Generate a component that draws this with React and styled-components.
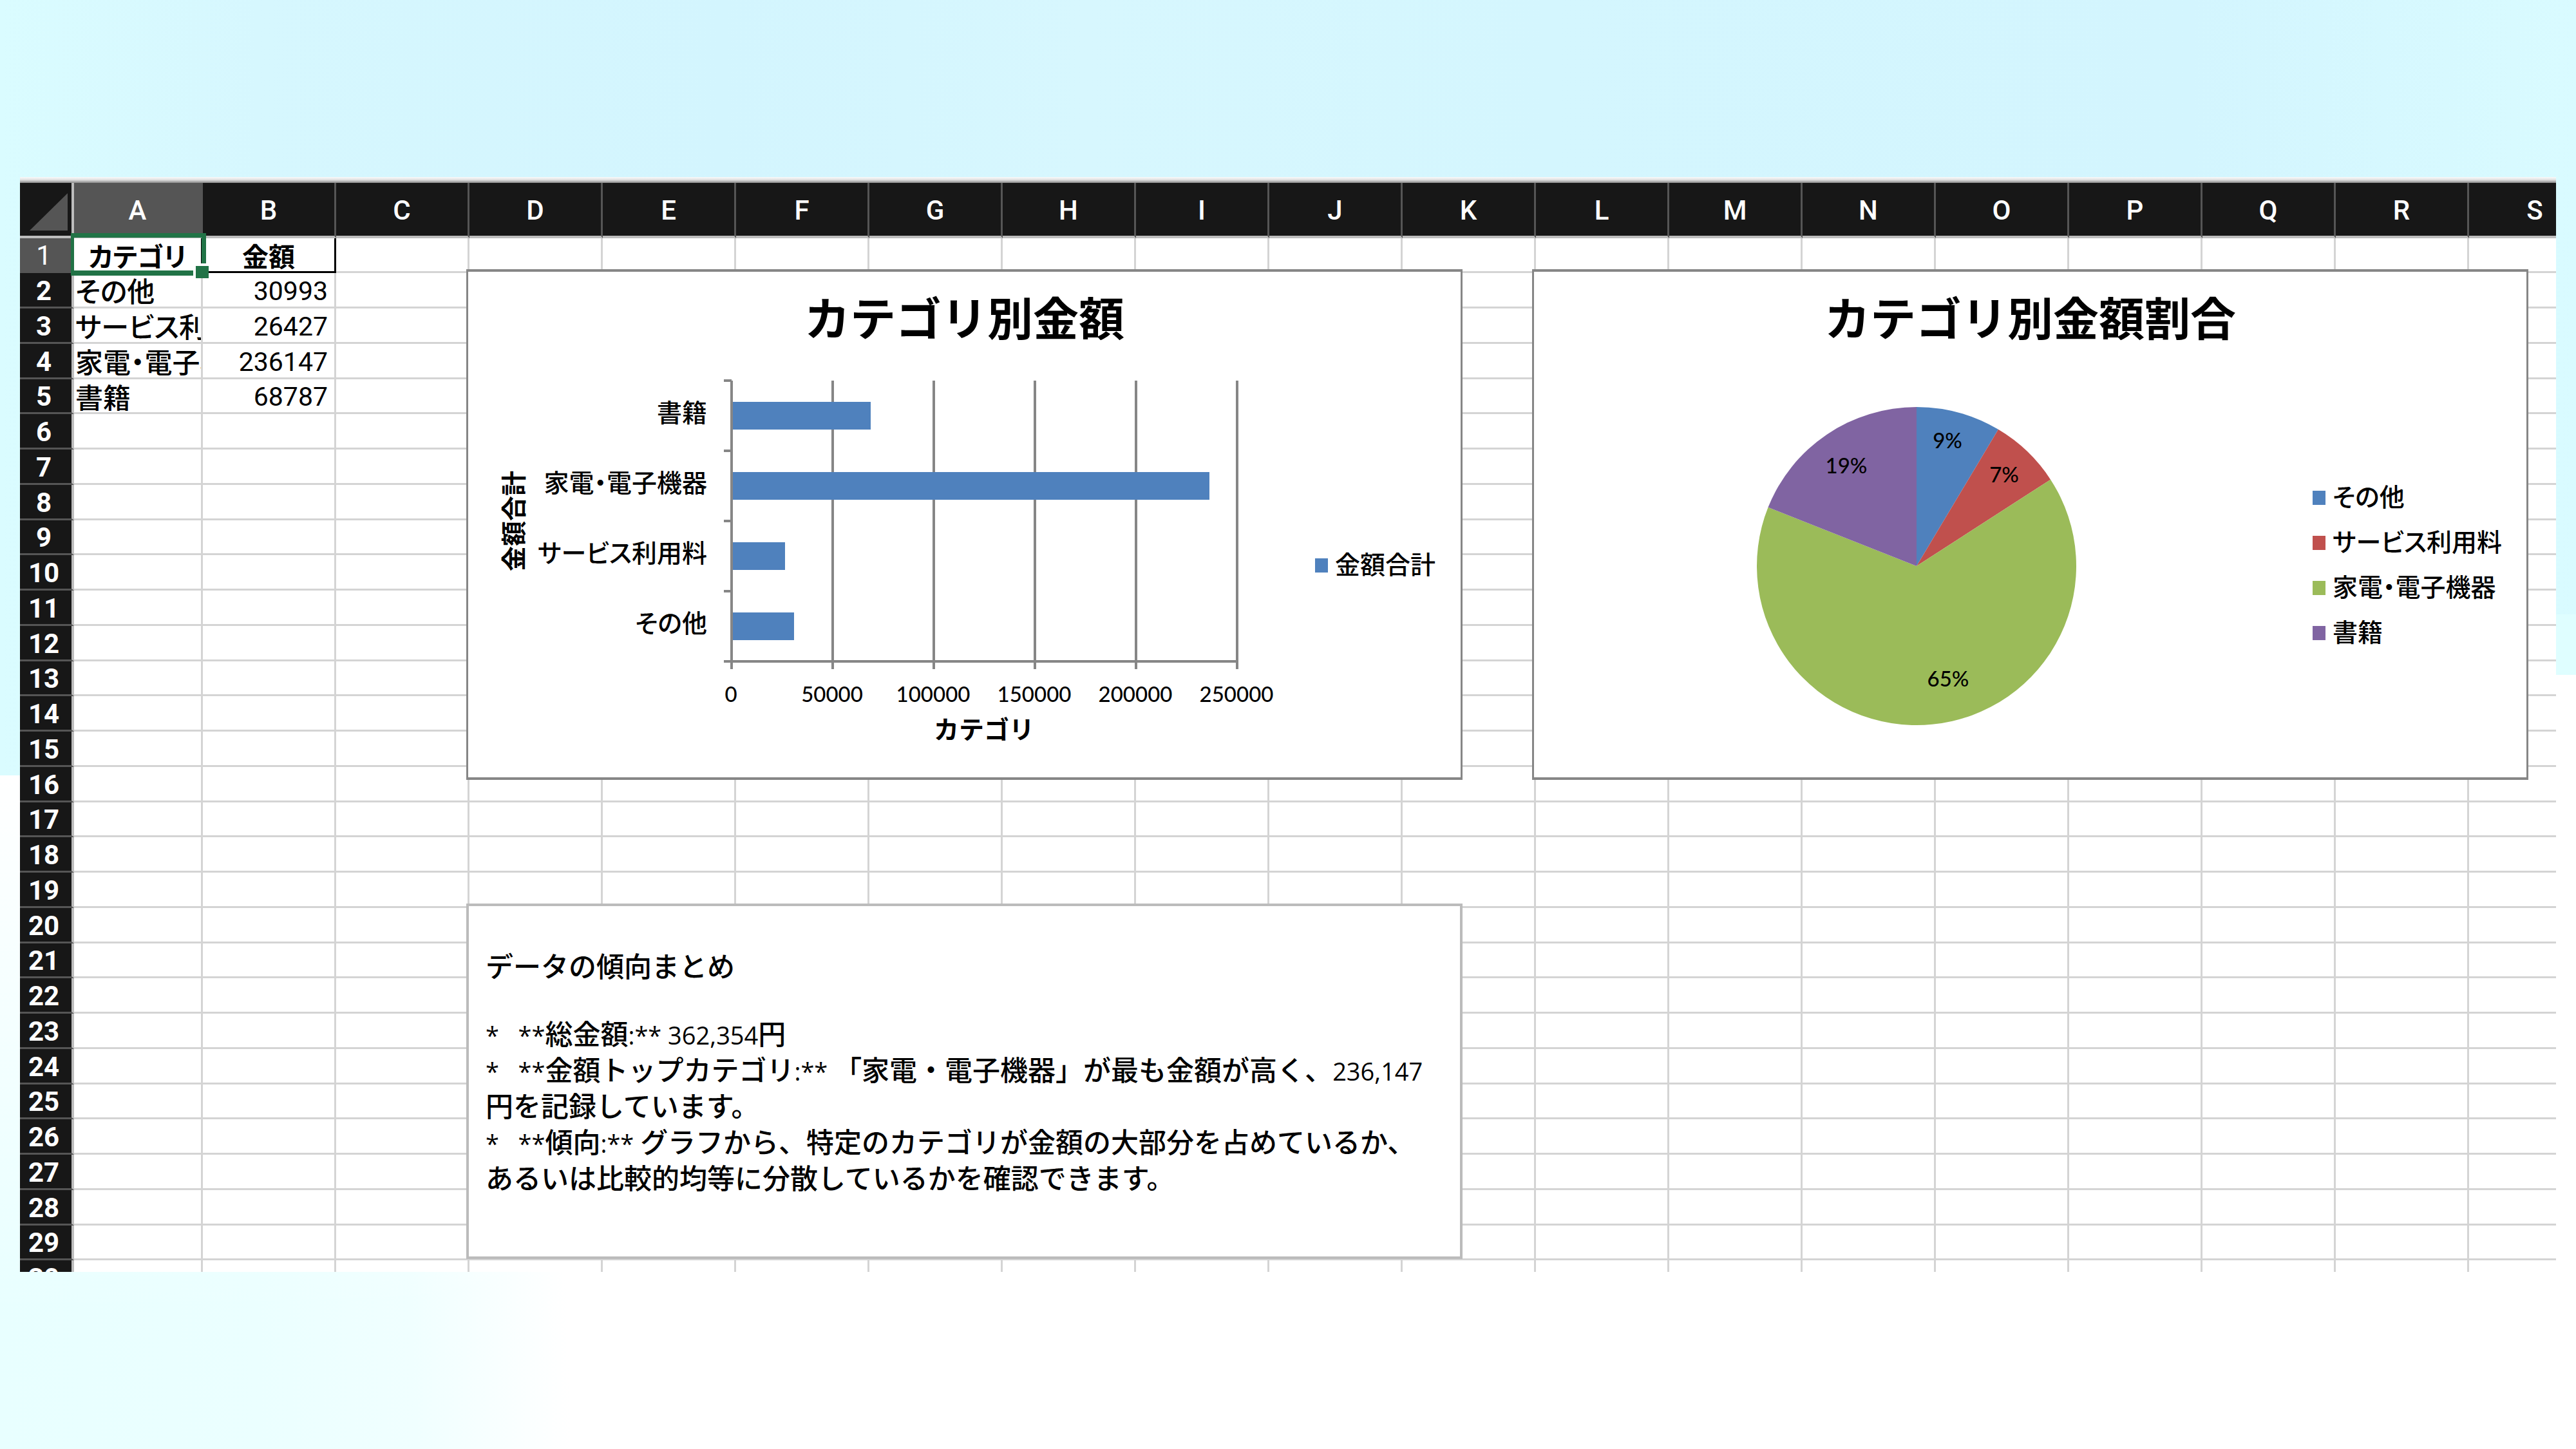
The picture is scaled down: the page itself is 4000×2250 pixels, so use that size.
import React from "react";
import styled, { createGlobalStyle, css } from "styled-components";

const JP = '"Noto Sans CJK JP", "Noto Sans", sans-serif';
const GRID = "#d4d4d4";
const INK = "#868686";

const GlobalStyle = createGlobalStyle`
  * { box-sizing: border-box; }
  body { margin: 0; background: #fff; color: #000; font-family: ${JP}; font-weight: 500; }
`;

const Page = styled.main`
  height: 100vh;
  padding: 275px 31px;
  background:
    linear-gradient(#fff, #fff) right 0 top 1048px / 31px 156px no-repeat,
    linear-gradient(#dffeff, #dffeff) right 0 top 954px / 31px 94px no-repeat,
    linear-gradient(90deg, #dafcff 0, #d6f7fe 10%, #d3f5fe 28%, #d7f7fe 42%, #d4f6fe 60%, #d3f5fe 85%, #d9fbff 100%) left top / 100% 1204px no-repeat,
    linear-gradient(180deg, #fff 0, rgba(255, 255, 255, 0) 80%) left bottom / 100% 1046px no-repeat,
    linear-gradient(88deg, #e8ffff 0, #ebffff 10%, #f0ffff 16%, #fff 22%) left bottom / 100% 1046px no-repeat;
`;

const Sheet = styled.section`
  position: relative;
  height: 100%;
  overflow: hidden;
  background: #fff;
`;

const TopEdge = styled.div`
  height: 9px;
  background: linear-gradient(#fafafa 0, #e2e2e2 45%, #8a8a8a 100%);
`;

const Grid = styled.table`
  width: 1px;
  table-layout: fixed;
  border-collapse: separate;
  border-spacing: 0;

  th, td { padding: 0; }
`;

const Col = styled.col`
  width: ${(p) => p.$w}px;
`;

const Corner = styled.td`
  height: 86px;
  background: #171717;
  border-right: 4px solid #bdbdbd;
  border-bottom: 4px solid #bdbdbd;

  svg { display: block; margin: 12px 6px 4px auto; }
`;

const ColHead = styled.th`
  height: 86px;
  background: ${(p) => (p.$active ? "#555" : "#171717")};
  border-right: 3px solid #555;
  border-bottom: 4px solid #bdbdbd;
  color: #fff;
  font: 500 42px/50px Roboto, sans-serif;

  span { display: block; padding-top: 4px; }
`;

const Row = styled.tr`
  height: 55px;

  &:nth-child(4n + 1) { height: 54px; }
`;

const RowHead = styled.th`
  background: ${(p) => (p.$active ? "#555" : "#171717")};
  border-right: 4px solid #bdbdbd;
  border-bottom: 3px solid #555;
  color: #fff;
  font: ${(p) => (p.$active ? 400 : 700)} 42px/48px Roboto, sans-serif;

  span { display: block; padding: 3px 6px 0 0; }
`;

const Cell = styled.td`
  position: relative;
  border-right: 3px solid ${GRID};
  border-bottom: 3px solid ${GRID};
  line-height: 48px;
  white-space: nowrap;
  ${(p) =>
    p.$boxed &&
    css`
      border-color: #000;
    `}
`;

const CellTitle = styled.strong`
  display: block;
  text-align: center;
  font-size: 41px;
  font-weight: 700;
  font-feature-settings: "palt";
`;

const CellText = styled.span`
  display: block;
  overflow-x: clip;
  padding-left: 2px;
  font-size: 43px;
  font-feature-settings: "palt";
`;

const CellNumber = styled.span`
  display: block;
  padding: 3px 10px 0 0;
  text-align: right;
  font-family: Roboto, sans-serif;
  font-size: 41px;
  font-weight: 400;
`;

const Selection = styled.i`
  position: absolute;
  z-index: 1;
  inset: -8px -8px -7px -5px;
  border: solid #217346;
  border-width: 7px 7px 8px 5px;

  &::after {
    content: "";
    position: absolute;
    right: -11px;
    bottom: -12px;
    width: 20px;
    height: 19px;
    background: #217346;
    box-shadow: 0 0 0 4px #fff;
    clip-path: inset(-4px 0 0 -4px);
  }
`;

const Floating = styled.article`
  position: absolute;
  z-index: 2;
  left: ${(p) => p.$x}px;
  top: ${(p) => p.$y}px;
  width: 1547px;
  height: ${(p) => p.$h}px;
  background: #fff;
`;

const ChartCard = styled(Floating)`
  border: solid ${INK};
  border-width: 4px 3px;
`;

const ChartTitle = styled.h2`
  margin: 0;
  padding-top: 20px;
  text-align: center;
  font-size: 71px;
  line-height: 96px;
  font-weight: 700;
`;

const BarBody = styled.div`
  display: flex;
  align-items: center;
  padding-left: 43px;
`;

const PieBody = styled.div`
  display: flex;
  align-items: center;
  padding: 94px 0 0 346px;
`;

const Plot = styled.svg`
  flex: none;
  display: block;
  overflow: visible;
  font-size: 39px;
`;

const Label = styled.text`
  font-feature-settings: "palt";
`;

const AxisTitle = styled.text`
  font-weight: 700;
`;

const Tick = styled.text`
  font-family: Lato, sans-serif;
  font-size: 33px;
`;

const Legend = styled.ul`
  margin: 0;
  padding: 0 0 10px;
  list-style: none;
`;

const BarLegend = styled(Legend)`
  margin-left: 42px;
  padding: 32px 0 0;
`;

const PieLegend = styled(Legend)`
  margin-left: 367px;
`;

const LegendItem = styled.li`
  display: flex;
  align-items: center;
  gap: 11px;
  height: 70px;
  font-size: 39px;
  line-height: 50px;
  white-space: nowrap;
  font-feature-settings: "palt";
`;

const Swatch = styled.span`
  width: 20px;
  height: 22px;
  margin-top: 8px;
  background: ${(p) => p.$c};
`;

const Note = styled(Floating)`
  border: 4px solid #bbb;
  padding: 63px 26px;
  font-size: 43px;
  line-height: 56px;
  white-space: pre;

  p { margin: 0; }
`;

const NoteHeading = styled.p`
  && { margin-bottom: 49px; }
`;

const Latin = styled.span`
  font-family: "Open Sans", sans-serif;
  font-size: 38px;
  line-height: 1;
`;

const columns = "ABCDEFGHIJKLMNOPQRS".split("");
const rowNumbers = Array.from({ length: 30 }, (_, i) => i + 1);

const data = [
  { name: "その他", value: 30993, color: "#4f81bd" },
  { name: "サービス利用料", value: 26427, color: "#c0504d" },
  { name: "家電・電子機器", value: 236147, color: "#9bbb59" },
  { name: "書籍", value: 68787, color: "#8064a2" },
];

function SheetCell({ row, col }) {
  const boxed = row === 1 && col < 2;
  const item = row > 1 ? data[row - 2] : null;
  return (
    <Cell $boxed={boxed}>
      {row === 1 && col === 0 && (
        <>
          <CellTitle>カテゴリ</CellTitle>
          <Selection />
        </>
      )}
      {row === 1 && col === 1 && <CellTitle>金額</CellTitle>}
      {item && col === 0 && <CellText>{item.name}</CellText>}
      {item && col === 1 && <CellNumber>{item.value}</CellNumber>}
    </Cell>
  );
}

function Spreadsheet() {
  return (
    <Grid>
      <colgroup>
        <Col $w={84} />
        {columns.map((c, i) => (
          <Col key={c} $w={i === 0 ? 200 : 207} />
        ))}
      </colgroup>
      <thead>
        <tr>
          <Corner>
            <svg width="59" height="58" aria-hidden="true">
              <path d="M59 0V58H0Z" fill="#555" />
            </svg>
          </Corner>
          {columns.map((c) => (
            <ColHead key={c} scope="col" $active={c === "A"}>
              <span>{c}</span>
            </ColHead>
          ))}
        </tr>
      </thead>
      <tbody>
        {rowNumbers.map((r) => (
          <Row key={r}>
            <RowHead scope="row" $active={r === 1}>
              <span>{r}</span>
            </RowHead>
            {columns.map((c, i) => (
              <SheetCell key={c} row={r} col={i} />
            ))}
          </Row>
        ))}
      </tbody>
    </Grid>
  );
}

function BarPlot() {
  const x0 = 366;
  const y0 = 53;
  const step = 157;
  const band = 109;
  const bottom = y0 + band * 4;
  const bars = [...data].reverse();
  return (
    <Plot width="1230" height="640" role="img" aria-label="カテゴリ別金額">
      <g stroke={INK} strokeWidth="4">
        {[0, 1, 2, 3, 4, 5].map((i) => (
          <line key={i} x1={x0 + step * i} x2={x0 + step * i} y1={y0} y2={bottom + 12} />
        ))}
        {[0, 1, 2, 3].map((i) => (
          <line key={i} x1={x0 - 12} x2={x0} y1={y0 + band * i} y2={y0 + band * i} />
        ))}
        <line x1={x0 - 12} x2={x0 + step * 5} y1={bottom} y2={bottom} />
      </g>
      {bars.map((b, i) => (
        <React.Fragment key={b.name}>
          <rect
            x={x0 + 2}
            y={y0 + band * i + 33}
            width={Math.round((b.value / 250000) * step * 5) - 2}
            height="43"
            fill="#4f81bd"
          />
          <Label x={x0 - 38} y={y0 + band * i + 64} textAnchor="end">
            {b.name}
          </Label>
        </React.Fragment>
      ))}
      {[0, 1, 2, 3, 4, 5].map((i) => (
        <Tick key={i} x={x0 + step * i - 1} y="552" textAnchor="middle">
          {i * 50000}
        </Tick>
      ))}
      <AxisTitle x={x0 + 392} y="609" textAnchor="middle">
        カテゴリ
      </AxisTitle>
      <AxisTitle transform="translate(42 271) rotate(-90)" textAnchor="middle">
        金額合計
      </AxisTitle>
    </Plot>
  );
}

const sliceLabels = [
  { text: "9%", x: 296, y: 64 },
  { text: "7%", x: 384, y: 117 },
  { text: "65%", x: 297, y: 434 },
  { text: "19%", x: 139, y: 103 },
];

function PiePlot() {
  const total = data.reduce((sum, d) => sum + d.value, 0);
  const point = (share) => {
    const a = share * Math.PI * 2;
    return `${248 + 248 * Math.sin(a)} ${247 - 247 * Math.cos(a)}`;
  };
  let acc = 0;
  return (
    <Plot width="496" height="494" role="img" aria-label="カテゴリ別金額割合">
      {data.map((d) => {
        const from = acc / total;
        acc += d.value;
        const to = acc / total;
        const large = to - from > 0.5 ? 1 : 0;
        return (
          <path
            key={d.name}
            fill={d.color}
            d={`M248 247L${point(from)}A248 247 0 ${large} 1 ${point(to)}Z`}
          />
        );
      })}
      {sliceLabels.map((l) => (
        <Tick key={l.text} x={l.x} y={l.y} textAnchor="middle">
          {l.text}
        </Tick>
      ))}
    </Plot>
  );
}

export default function App() {
  return (
    <Page>
      <GlobalStyle />
      <Sheet>
        <TopEdge />
        <Spreadsheet />
        <ChartCard $x={693} $y={143} $h={793}>
          <ChartTitle>カテゴリ別金額</ChartTitle>
          <BarBody>
            <BarPlot />
            <BarLegend>
              <LegendItem>
                <Swatch $c="#4f81bd" />
                金額合計
              </LegendItem>
            </BarLegend>
          </BarBody>
        </ChartCard>
        <ChartCard $x={2348} $y={143} $h={793}>
          <ChartTitle>カテゴリ別金額割合</ChartTitle>
          <PieBody>
            <PiePlot />
            <PieLegend>
              {data.map((d) => (
                <LegendItem key={d.name}>
                  <Swatch $c={d.color} />
                  {d.name}
                </LegendItem>
              ))}
            </PieLegend>
          </PieBody>
        </ChartCard>
        <Note $x={693} $y={1128} $h={552}>
          <NoteHeading>データの傾向まとめ</NoteHeading>
          <p>
            <Latin>{"*   **"}</Latin>総金額<Latin>{":** 362,354"}</Latin>円
          </p>
          <p>
            <Latin>{"*   **"}</Latin>金額トップカテゴリ<Latin>{":** "}</Latin>
            「家電・電子機器」が最も金額が高く、<Latin>236,147</Latin>
            <br />
            円を記録しています。
          </p>
          <p>
            <Latin>{"*   **"}</Latin>傾向<Latin>{":** "}</Latin>
            グラフから、特定のカテゴリが金額の大部分を占めているか、
            <br />
            あるいは比較的均等に分散しているかを確認できます。
          </p>
        </Note>
      </Sheet>
    </Page>
  );
}
